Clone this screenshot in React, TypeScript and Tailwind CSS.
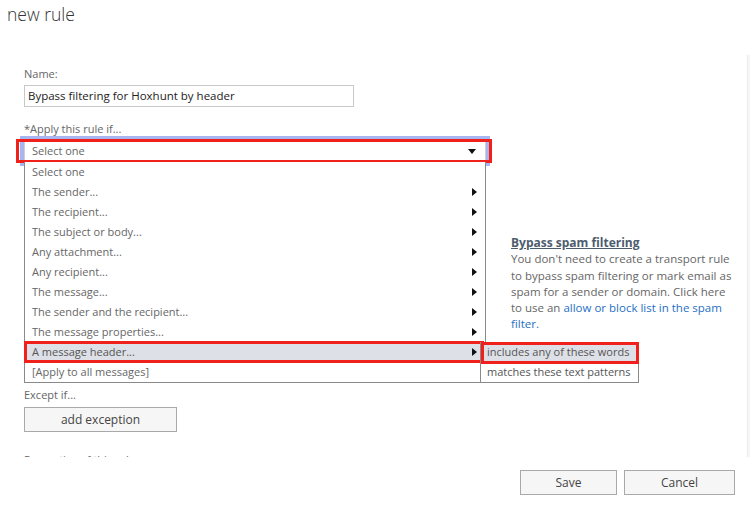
import React from "react";

const ITEMS: { label: string; sub?: boolean }[] = [
  { label: "Select one" },
  { label: "The sender...", sub: true },
  { label: "The recipient...", sub: true },
  { label: "The subject or body...", sub: true },
  { label: "Any attachment...", sub: true },
  { label: "Any recipient...", sub: true },
  { label: "The message...", sub: true },
  { label: "The sender and the recipient...", sub: true },
  { label: "The message properties...", sub: true },
  { label: "A message header...", sub: true },
  { label: "[Apply to all messages]" },
];

function Tri() {
  return (
    <svg width="5" height="8" viewBox="0 0 5 8" className="shrink-0">
      <path d="M0 0 L5 4 L0 8 Z" fill="#111" />
    </svg>
  );
}

function Highlight({ className }: { className: string }) {
  return <div className={`pointer-events-none absolute border-[3px] border-[#f0201a] ${className}`} />;
}

export default function App() {
  return (
    <div
      className="relative h-[509px] w-[750px] overflow-hidden bg-white text-[#666]"
      style={{ fontFamily: '"Open Sans", "Noto Sans", sans-serif' }}
    >
      {/* title */}
      <div className="h-[55px] pl-[7px] pt-[1px] text-[17.5px] font-light leading-[26px] text-[#333]">new rule</div>

      {/* scroll body */}
      <div className="flex h-[402px]">
        <div className="flex flex-1 overflow-hidden pl-[24px]">
          <div className="w-[466px] shrink-0">
            <div className="pt-[11px] text-[11px] leading-[16px]">Name:</div>
            <div className="mt-[3px] flex h-[22px] w-[330px] items-center border border-[#c8c8c8] px-[3px] text-[11.5px] text-[#222]">
              Bypass filtering for Hoxhunt by header
            </div>
            <div className="mt-[14px] text-[11px] leading-[16px]">*Apply this rule if...</div>

            {/* select + open list */}
            <div className="relative mt-[4px] w-[462px]">
              <div className="absolute -left-[4px] -right-[4px] -top-[5px] h-[30px] bg-[#a7b6f2]" />
              <div className="relative flex h-[21px] items-center justify-between border border-[#d0d0d0] bg-white pl-[7px] pr-[9px] text-[11px]">
                <span>Select one</span>
                <svg width="8" height="5" viewBox="0 0 8 5">
                  <path d="M0 0 L8 0 L4 5 Z" fill="#111" />
                </svg>
              </div>
              <Highlight className="-left-[8px] -right-[6px] -top-[2px] h-[24px]" />

              <div className="absolute left-0 top-[21px] w-[462px] border border-t-0 border-[#8a8a8a] bg-white text-[11px]">
                {ITEMS.map((it) => {
                  const active = it.label === "A message header...";
                  return (
                    <div
                      key={it.label}
                      className={`relative flex h-[20px] items-center justify-between pl-[7px] pr-[8px] ${
                        active ? "bg-[#dde0e6] text-[#555]" : ""
                      }`}
                    >
                      <span>{it.label}</span>
                      {it.sub && <Tri />}
                      {active && (
                        <>
                          <Highlight className="-left-[1px] right-[1px] -top-[1px] h-[22px]" />
                          <div className="absolute left-[455px] top-0 w-[159px] border border-[#8a8a8a] bg-white">
                            <div className="flex h-[19px] items-center bg-[#dde0e6] pl-[6px] text-[#555]">
                              includes any of these words
                            </div>
                            <div className="flex h-[20px] items-center pl-[6px]">matches these text patterns</div>
                            <Highlight className="-left-[0px] -right-[1px] -top-[1px] h-[22px]" />
                          </div>
                        </>
                      )}
                    </div>
                  );
                })}
              </div>
            </div>

            <div className="h-[225px]" />
            <div className="text-[11px] leading-[16px]">Except if...</div>
            <button className="mt-[4px] flex h-[25px] w-[153px] items-center justify-center border border-[#a9a9a9] bg-[#f6f6f6] text-[12px] text-[#444]">
              add exception
            </button>
            <div className="mt-[20px] text-[11px] leading-[16px]">Properties of this rule...</div>
          </div>

          {/* help column */}
          <div className="pl-[21px] pt-[180px] text-[11.5px] leading-[16.25px] whitespace-nowrap">
            <div className="text-[12px] font-bold text-[#4d5d6e] underline">Bypass spam filtering</div>
            <div>
              You don't need to create a transport rule
              <br />
              to bypass spam filtering or mark email as
              <br />
              spam for a sender or domain. Click here
              <br />
              to use an <span className="text-[#1f6fc5]">allow or block list in the spam</span>
              <br />
              <span className="text-[#1f6fc5]">filter.</span>
            </div>
          </div>
        </div>
        <div className="w-[3px] border-l border-[#ececec] bg-[#f6f6f6]" />
      </div>

      {/* footer */}
      <div className="flex justify-end gap-[7px] pr-[15px] pt-[13px]">
        <button className="h-[25px] w-[97px] border border-[#a9a9a9] bg-[#f6f6f6] text-[12px] text-[#444]">Save</button>
        <button className="h-[25px] w-[111px] border border-[#a9a9a9] bg-[#f6f6f6] text-[12px] text-[#444]">Cancel</button>
      </div>
    </div>
  );
}
